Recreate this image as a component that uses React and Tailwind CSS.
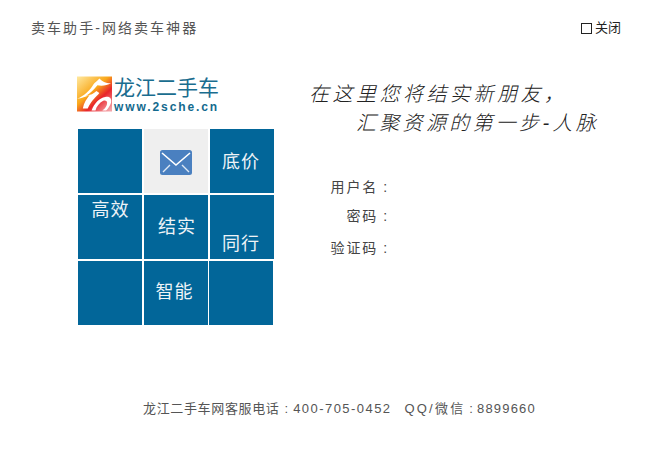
const cjk = 'font-["Liberation_Sans","Noto_Sans_CJK_SC",sans-serif]';

const Logo = () => (
  <div className="flex items-center h-[36px]">
    <svg width="35" height="36" viewBox="0 0 36 36" className="shrink-0">
      <defs>
        <linearGradient id="logoBg" x1="0" y1="0" x2="0.9" y2="1">
          <stop offset="0" stopColor="#ffe9a0" />
          <stop offset="0.45" stopColor="#f9a81a" />
          <stop offset="0.68" stopColor="#e8252b" />
          <stop offset="1" stopColor="#f4a3a8" />
        </linearGradient>
      </defs>
      <rect width="36" height="36" fill="url(#logoBg)" />
      <path d="M23 2c3 3 6 5 12 5-4 2-9 3-14 2-4 5-7 8-12 11 5-1 8-2 11-5l3 2c-3 4-8 7-12 16H6c1-6 4-10 7-14-4 2-8 3-13 4 7-3 13-8 17-15C18 6 21 5 23 2z" fill="#fff" />
      <path d="M15 35c3-8 8-13 14-14 5-1 7 2 6 6-1 3-3 6-5 8h-4c3-2 5-5 5-8 0-2-2-3-4-2-4 2-7 6-8 10z" fill="#fff" />
    </svg>
    <div className="ml-[2px] flex flex-col">
      <span className={`${cjk} text-[21px] leading-[24px] tracking-[0px] text-[#1a6d8f] h-[25px]`}>龙江二手车</span>
      <span className="font-['Liberation_Sans',sans-serif] font-bold text-[12px] leading-[12px] tracking-[1.9px] text-[#136a8e]">www.2sche.cn</span>
    </div>
  </div>
);

const Cell = ({ className = '', children }) => (
  <div className={`w-[64px] h-[64px] bg-[#026699] text-[#eef3f7] text-[18px] leading-[20px] tracking-[1px] flex justify-center ${className}`}>
    {children}
  </div>
);

const Mail = () => (
  <svg width="32" height="25" viewBox="0 0 32 25">
    <rect width="32" height="25" rx="2.5" fill="#4a80c0" />
    <path d="M2 3l14 12L30 3" fill="none" stroke="#fff" strokeWidth="1.6" />
    <path d="M3 22l7-7M29 22l-7-7" fill="none" stroke="#dfe9f5" strokeWidth="1.4" />
  </svg>
);

const Field = ({ label, className = '' }) => (
  <div className={`h-[20px] flex items-center justify-end w-[60px] text-[14px] tracking-[1.9px] text-[#444] whitespace-nowrap ${className}`}>
    {label}<span className="ml-[5px]">:</span>
  </div>
);

export default function App() {
  return (
    <div className={`w-[650px] h-[450px] bg-white flex flex-col overflow-hidden ${cjk}`}>
      <header className="flex justify-between items-center h-[20px] mt-[18px] pl-[31px] pr-[29px]">
        <span className="text-[14px] tracking-[2.05px] text-[#555]">卖车助手-网络卖车神器</span>
        <span className="flex items-center text-[13px] text-[#222]">
          <span className="w-[11px] h-[11px] border border-[#222] mr-[3px]"></span>
          关闭
        </span>
      </header>

      <main className="flex mt-[38px] pl-[77px]">
        <div className="w-[197px] shrink-0">
          <Logo />
          <div className="mt-[17px] ml-[1px] flex flex-col gap-[2px]">
            <div className="flex gap-[2px]">
              <Cell />
              <Cell className="bg-[#efefef] items-center pt-[2px]"><Mail /></Cell>
              <Cell className="items-center pr-[2px] pt-[1px]">底价</Cell>
            </div>
            <div className="flex gap-[2px]">
              <Cell className="pt-[5px] pl-[1px]">高效</Cell>
              <Cell className="items-center pl-[2px]">结实</Cell>
              <Cell className="items-end pb-[5px] pr-[2px]">同行</Cell>
            </div>
            <div className="flex gap-[2px]">
              <Cell />
              <Cell className="items-center pb-[3px] pr-[3px]">智能</Cell>
              <Cell className="-ml-[1px]" />
            </div>
          </div>
        </div>

        <div className="ml-[35px] flex flex-col">
          <div className="h-[64px] text-[#222] font-light italic text-[20px] leading-[30px] whitespace-nowrap mt-[3px]">
            <div className="tracking-[3.5px]">在这里您将结实新朋友，</div>
            <div className="ml-[47px] tracking-[3.3px] -mt-[1px]">汇聚资源的第一步-人脉</div>
          </div>
          <div className="mt-[34px] ml-[20px] flex flex-col">
            <Field label="用户名" />
            <Field label="密码" className="mt-[9px]" />
            <Field label="验证码" className="mt-[12px]" />
          </div>
        </div>
      </main>

      <footer className="mt-auto mb-[31px] ml-[143px] text-[13px] leading-[20px] text-[#555] whitespace-pre flex">
        <span className="tracking-[0.65px]">龙江二手车网客服电话</span>
        <span className="mx-[5px]">:</span>
        <span className="tracking-[1.45px]">400-705-0452</span>
        <span className="ml-[13px] tracking-[2.2px]">QQ/微信</span>
        <span className="mx-[4px]">:</span>
        <span className="tracking-[1.2px]">8899660</span>
      </footer>
    </div>
  );
}
